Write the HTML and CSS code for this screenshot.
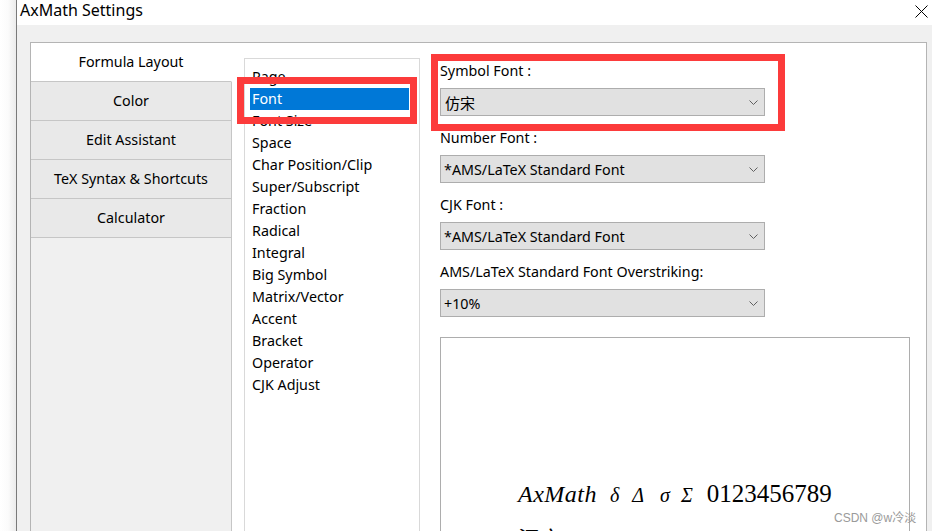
FILE: index.html
```html
<!DOCTYPE html>
<html lang="en">
<head>
<meta charset="utf-8">
<title>AxMath Settings</title>
<link rel="stylesheet" href="styles.css">
</head>
<body>
<div class="screen">
  <div class="shadow"></div>
  <div class="window">
    <div class="titlebar">
      <span class="title">AxMath Settings</span>
      <svg class="close" width="13" height="13" viewBox="0 0 13 13"><path d="M0.5 0.5 L12.5 12.5 M12.5 0.5 L0.5 12.5" stroke="#000" stroke-width="1" fill="none"/></svg>
    </div>
    <div class="client">
      <div class="panel">
        <div class="tabs">
          <div class="tab active">Formula Layout</div>
          <div class="tab">Color</div>
          <div class="tab">Edit Assistant</div>
          <div class="tab">TeX Syntax &amp; Shortcuts</div>
          <div class="tab">Calculator</div>
          <div class="tabs-fill"></div>
        </div>
        <div class="page">
          <ul class="list">
            <li>Page</li>
            <li class="selected">Font</li>
            <li>Font Size</li>
            <li>Space</li>
            <li>Char Position/Clip</li>
            <li>Super/Subscript</li>
            <li>Fraction</li>
            <li>Radical</li>
            <li>Integral</li>
            <li>Big Symbol</li>
            <li>Matrix/Vector</li>
            <li>Accent</li>
            <li>Bracket</li>
            <li>Operator</li>
            <li>CJK Adjust</li>
          </ul>
          <div class="form">
            <div class="label first">Symbol Font :</div>
            <div class="combo"><span class="cjk">仿宋</span><svg class="chev" width="9" height="5" viewBox="0 0 9 5"><path d="M0.5 0.5 L4.5 4.5 L8.5 0.5" stroke="#606060" fill="none"/></svg></div>
            <div class="label">Number Font :</div>
            <div class="combo"><span>*AMS/LaTeX Standard Font</span><svg class="chev" width="9" height="5" viewBox="0 0 9 5"><path d="M0.5 0.5 L4.5 4.5 L8.5 0.5" stroke="#606060" fill="none"/></svg></div>
            <div class="label">CJK Font :</div>
            <div class="combo"><span>*AMS/LaTeX Standard Font</span><svg class="chev" width="9" height="5" viewBox="0 0 9 5"><path d="M0.5 0.5 L4.5 4.5 L8.5 0.5" stroke="#606060" fill="none"/></svg></div>
            <div class="label">AMS/LaTeX Standard Font Overstriking:</div>
            <div class="combo"><span>+10%</span><svg class="chev" width="9" height="5" viewBox="0 0 9 5"><path d="M0.5 0.5 L4.5 4.5 L8.5 0.5" stroke="#606060" fill="none"/></svg></div>
            <div class="preview">
              <div class="math"><span class="it wide">AxMath</span><span class="it sym s1">δ</span><span class="it sym s2">Δ</span><span class="it sym s3">σ</span><span class="it sym s4">Σ</span><span class="digits">0123456789</span></div>
              <div class="hanzi">汉字</div>
            </div>
          </div>
        </div>
      </div>
    </div>
  </div>
  <div class="mark mark-list"></div>
  <div class="mark mark-symbol"></div>
  <div class="watermark">CSDN @w冷淡</div>
</div>
</body>
</html>
```

FILE: styles.css
```css
* { box-sizing: border-box; }
html, body { margin: 0; padding: 0; }
body {
  width: 932px;
  height: 531px;
  overflow: hidden;
  background: #fff;
  font-family: "Noto Sans", "Noto Sans CJK SC", sans-serif;
  font-size: 14.3px;
  color: #000;
}
.screen {
  position: relative;
  display: flex;
  width: 932px;
  height: 531px;
  overflow: hidden;
}
.shadow {
  width: 16px;
  flex: none;
  background: linear-gradient(to right, #ffffff 0%, #fbfbfb 50%, #ececec 100%);
}
.window {
  flex: 1;
  display: flex;
  flex-direction: column;
  border-left: 1px solid #7a7a7a;
  min-width: 0;
}
.titlebar {
  height: 25px;
  flex: none;
  background: #fff;
  display: flex;
  align-items: center;
  justify-content: space-between;
  padding: 0 4px 5px 3px;
}
.title {
  font-size: 16px;
  color: #000;
}
.close { display: block; margin-top: 3px; }
.client {
  flex: 1;
  background: #f0f0f0;
  padding: 17px 5px 0 13px;
  display: flex;
  min-height: 0;
}
.panel {
  flex: 1;
  display: flex;
  background: #fff;
  border: 1px solid #b4b4b4;
  border-bottom: none;
  min-height: 0;
}
.tabs {
  width: 201px;
  flex: none;
  display: flex;
  flex-direction: column;
}
.tab {
  height: 39px;
  flex: none;
  display: flex;
  align-items: center;
  justify-content: center;
  background: #e9e9e9;
  border-bottom: 1px solid #c6c6c6;
  border-right: 1px solid #c6c6c6;
  padding-bottom: 1px;
  color: #000;
}
.tab.active {
  background: #fff;
  border-right-color: #fff;
}
.tabs-fill {
  flex: 1;
  background: #f0f0f0;
  border-right: 1px solid #c6c6c6;
}
.page {
  flex: 1;
  display: flex;
  padding: 15px 0 0 12px;
  min-height: 0;
}
.list {
  list-style: none;
  margin: 0;
  width: 176px;
  flex: none;
  border: 1px solid #d9d9d9;
  border-bottom: none;
  padding: 7px 0 0 5px;
}
.list li {
  height: 22px;
  line-height: 22px;
  width: 159px;
  padding-left: 2px;
  white-space: nowrap;
}
.list li.selected {
  background: #0078d7;
  color: #fff;
}
.form {
  margin-left: 20px;
  width: 470px;
  display: flex;
  flex-direction: column;
  padding-top: 2px;
}
.label {
  flex: none;
  height: 22px;
  line-height: 22px;
  margin-top: 11px;
  margin-bottom: 6px;
}
.label.first { margin-top: 0; }
.combo {
  flex: none;
  width: 325px;
  height: 28px;
  background: #e1e1e1;
  border: 1px solid #adadad;
  display: flex;
  align-items: center;
  justify-content: space-between;
  padding: 0 6px 0 3px;
}
.combo .cjk {
  font-family: "Noto Sans CJK SC", sans-serif;
  font-size: 15px;
  padding-left: 1px;
}
.chev { display: block; }
.preview {
  margin-top: 20px;
  flex: 1;
  min-height: 0;
  border: 1px solid #adadad;
  border-bottom: none;
  padding: 141px 0 0 77px;
  font-family: "Liberation Serif", "DejaVu Serif", serif;
  color: #000;
}
.math {
  font-size: 24px;
  line-height: 30px;
  white-space: nowrap;
}
.it { font-style: italic; }
.wide { letter-spacing: 0.5px; margin-right: 13px; }
.sym { font-size: 20px; }
.s1 { margin-right: 13px; }
.s2 { margin-right: 16px; }
.s3 { margin-right: 11px; }
.s4 { margin-right: 14px; }
.digits { font-size: 25px; }
.hanzi {
  font-family: "Noto Sans CJK SC", serif;
  font-size: 22px;
  line-height: 30px;
  margin-top: 12px;
}
.mark {
  position: absolute;
  border: 7px solid #fc3b3b;
  pointer-events: none;
}
.mark-list {
  left: 237px;
  top: 77px;
  width: 180px;
  height: 47px;
}
.mark-symbol {
  left: 431px;
  top: 54px;
  width: 354px;
  height: 77px;
}
.watermark {
  position: absolute;
  left: 834px;
  top: 508px;
  font-family: "Liberation Sans", "Noto Sans CJK SC", sans-serif;
  font-size: 12px;
  color: #9a9a9a;
}
```
